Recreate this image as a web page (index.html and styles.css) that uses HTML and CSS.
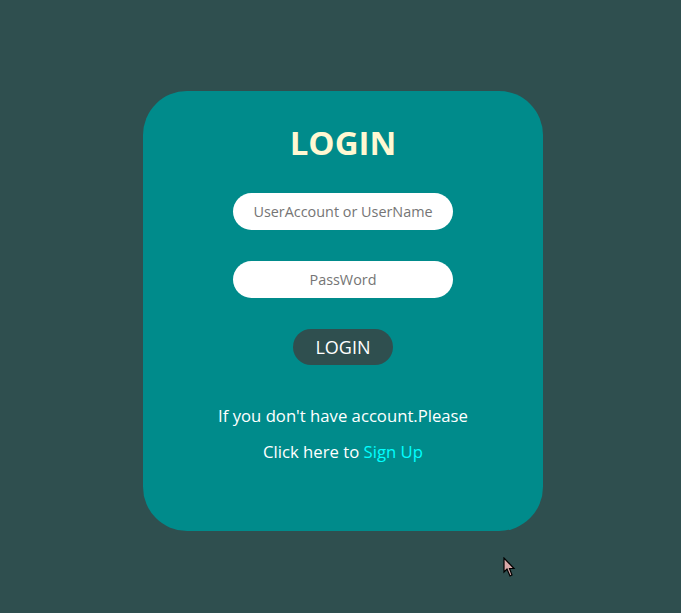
FILE: index.html
```html
<!DOCTYPE html>
<html lang="en">
<head>
<meta charset="utf-8">
<title>Login</title>
<link rel="stylesheet" href="styles.css">
</head>
<body>
<main class="page">
  <form class="card" onsubmit="return false">
    <h1 class="title">LOGIN</h1>
    <input class="field" type="text" placeholder="UserAccount or UserName">
    <input class="field field-gap" type="password" placeholder="PassWord">
    <button class="btn" type="submit">LOGIN</button>
    <p class="note">If you don't have account.Please<br>Click here to <a class="link" href="#">Sign Up</a></p>
  </form>
</main>
<svg class="cursor" width="14" height="22" viewBox="0 0 14 22" xmlns="http://www.w3.org/2000/svg">
  <path d="M1 1 L1 15 L4 12 L7 19 L9 18 L6.5 11.5 L11 11.5 Z" fill="#d9a9a9" stroke="#000" stroke-width="1.2" stroke-linejoin="miter"/>
</svg>
</body>
</html>
```
FILE: styles.css
```css
html, body {
  margin: 0;
  padding: 0;
  height: 100%;
}
body {
  background: #2f4f4f;
  font-family: "Open Sans", "Noto Sans", sans-serif;
}
.page {
  display: flex;
  justify-content: center;
  padding: 91px 0 0 5px;
}
.card {
  width: 400px;
  height: 440px;
  box-sizing: border-box;
  background: #008b8b;
  border-radius: 44px;
  display: flex;
  flex-direction: column;
  align-items: center;
  padding-top: 32px;
}
.title {
  margin: 0;
  font-size: 33px;
  line-height: 40px;
  font-weight: 700;
  color: #fff8d2;
}
.field {
  margin-top: 30px;
  width: 220px;
  height: 37px;
  box-sizing: border-box;
  border: none;
  border-radius: 19px;
  background: #fff;
  text-align: center;
  font-family: inherit;
  font-size: 14.4px;
  outline: none;
}
.field::placeholder {
  color: #757575;
}
.field-gap {
  margin-top: 31px;
}
.btn {
  margin-top: 31px;
  width: 100px;
  height: 36px;
  border: none;
  border-radius: 18px;
  background: #2f4f4f;
  color: #fff;
  font-family: inherit;
  font-size: 18px;
  padding: 0;
}
.note {
  margin: 33px 0 0;
  color: #fff;
  font-size: 16.7px;
  line-height: 36px;
  text-align: center;
}
.link {
  color: #00ffff;
  text-decoration: none;
}
.cursor {
  position: absolute;
  left: 503px;
  top: 557px;
}
```
